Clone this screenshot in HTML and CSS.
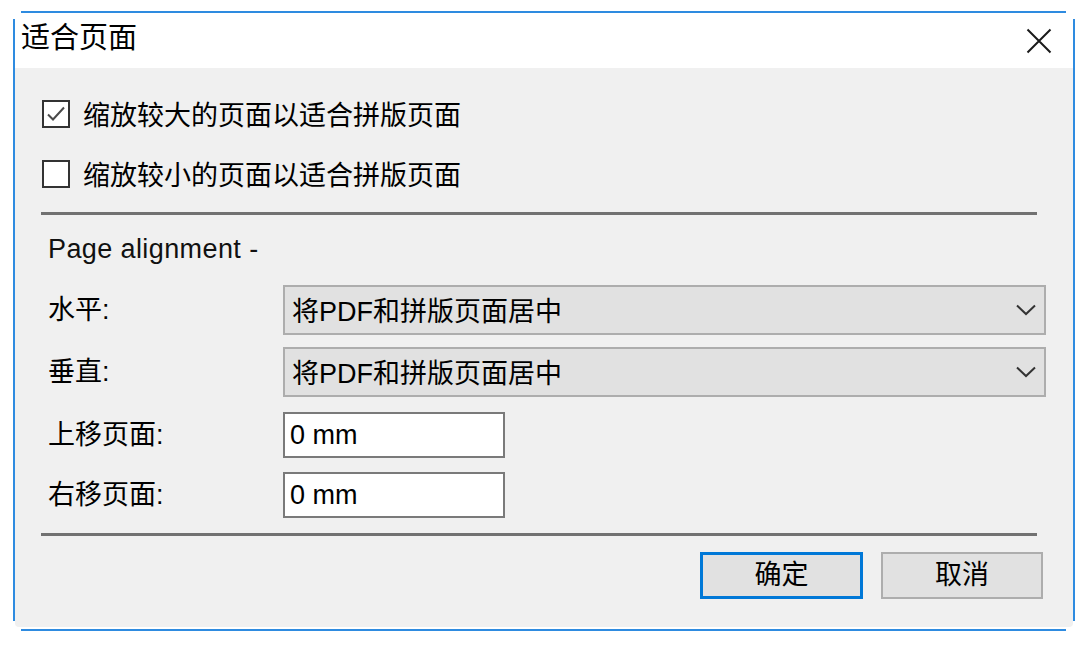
FILE: index.html
```html
<!DOCTYPE html>
<html lang="zh-CN">
<head>
<meta charset="utf-8">
<title>适合页面</title>
<link rel="stylesheet" href="styles.css">
</head>
<body>
<div class="window">
  <div class="edge"></div>
  <div class="frame">
    <div class="titlebar">
      <span class="title">适合页面</span>
      <svg class="close" width="26" height="26" viewBox="0 0 26 26" aria-hidden="true">
        <path d="M1.5 1.5 L24.5 24.5 M24.5 1.5 L1.5 24.5" stroke="#1a1a1a" stroke-width="2" fill="none"/>
      </svg>
    </div>
    <div class="content">
      <div class="check-row">
        <span class="box">
          <svg width="24" height="24" viewBox="0 0 24 24" aria-hidden="true">
            <path d="M4 12.5 L9 17.5 L20 5.5" stroke="#4a4a4a" stroke-width="2" fill="none"/>
          </svg>
        </span>
        <span class="check-label">缩放较大的页面以适合拼版页面</span>
      </div>
      <div class="check-row">
        <span class="box"></span>
        <span class="check-label">缩放较小的页面以适合拼版页面</span>
      </div>
      <div class="sep sep-top"></div>
      <div class="section-title">Page alignment -</div>
      <div class="form">
        <div class="field">
          <span class="label">水平:</span>
          <div class="select">
            <span>将PDF和拼版页面居中</span>
            <svg class="chev" width="20" height="12" viewBox="0 0 20 12" aria-hidden="true">
              <path d="M1 1.5 L10 10 L19 1.5" stroke="#333" stroke-width="2" fill="none"/>
            </svg>
          </div>
        </div>
        <div class="field">
          <span class="label">垂直:</span>
          <div class="select">
            <span>将PDF和拼版页面居中</span>
            <svg class="chev" width="20" height="12" viewBox="0 0 20 12" aria-hidden="true">
              <path d="M1 1.5 L10 10 L19 1.5" stroke="#333" stroke-width="2" fill="none"/>
            </svg>
          </div>
        </div>
        <div class="field field-input first-input">
          <span class="label">上移页面:</span>
          <div class="input">0 mm</div>
        </div>
        <div class="field field-input">
          <span class="label">右移页面:</span>
          <div class="input">0 mm</div>
        </div>
      </div>
      <div class="sep sep-bottom"></div>
      <div class="buttons">
        <div class="btn btn-primary">确定</div>
        <div class="btn">取消</div>
      </div>
    </div>
  </div>
  <div class="edge edge-bottom"></div>
</div>
</body>
</html>
```

FILE: styles.css
```css
html, body {
  margin: 0;
  padding: 0;
  background: #ffffff;
}

body {
  padding-top: 11px;
  font-family: "Liberation Sans", "Noto Sans CJK SC", sans-serif;
  color: #000;
}

.window {
  margin-left: 13px;
  width: 1062px;
}

.edge {
  height: 2px;
  margin: 0 9px 0 8px;
  background: #2e8be0;
}

.edge-bottom {
  margin-top: 2px;
}

.frame {
  padding: 0 2px;
  background:
    linear-gradient(#2e8be0, #2e8be0) left 6px / 2px calc(100% - 12px) no-repeat,
    linear-gradient(#2e8be0, #2e8be0) right 6px / 2px calc(100% - 12px) no-repeat;
}

.titlebar {
  height: 55px;
  background: #ffffff;
  display: flex;
  align-items: center;
  justify-content: space-between;
  padding: 0 21px 0 6px;
}

.title {
  font-size: 29px;
  line-height: 36px;
  margin-top: -5px;
}

.close {
  display: block;
  margin-top: 1px;
}

.content {
  background: #f0f0f0;
  padding: 32px 27px 28px 26px;
  border-radius: 0 0 4px 4px;
}

.check-row {
  display: flex;
  align-items: center;
  height: 28px;
}

.check-row + .check-row {
  margin-top: 32px;
}

.box {
  box-sizing: border-box;
  width: 28px;
  height: 28px;
  border: 2px solid #333;
  background: #fff;
  margin-left: 1px;
  display: flex;
  align-items: center;
  justify-content: center;
}

.box svg {
  display: block;
}

.check-label {
  font-size: 27px;
  line-height: 32px;
  margin-left: 13px;
  margin-top: 3px;
}

.sep {
  height: 3px;
  background: #717171;
  margin-right: 9px;
}

.sep-top {
  margin-top: 24px;
}

.section-title {
  font-size: 27px;
  letter-spacing: 0.4px;
  line-height: 32px;
  margin-top: 18px;
  padding-left: 7px;
  color: #111;
}

.form {
  margin-top: 20px;
}

.field {
  display: flex;
  align-items: center;
}

.field + .field {
  margin-top: 12px;
}

.field.first-input {
  margin-top: 15px;
}

.field.first-input + .field {
  margin-top: 14px;
}

.label {
  width: 235px;
  flex: none;
  padding-left: 7px;
  font-size: 27px;
  line-height: 32px;
}

.select {
  flex: 1;
  box-sizing: border-box;
  height: 50px;
  background: #e1e1e1;
  border: 2px solid #adadad;
  display: flex;
  align-items: center;
  justify-content: space-between;
  padding: 3px 8px 0 7px;
  font-size: 27px;
  line-height: 32px;
}

.chev {
  display: block;
  margin-top: -3px;
}

.input {
  box-sizing: border-box;
  width: 222px;
  height: 46px;
  background: #fff;
  border: 2px solid #7a7a7a;
  font-size: 27px;
  line-height: 40px;
  padding: 1px 0 0 5px;
}

.sep-bottom {
  margin-top: 15px;
}

.buttons {
  margin-top: 16px;
  display: flex;
  justify-content: flex-end;
  gap: 18px;
  padding-right: 3px;
}

.btn {
  box-sizing: border-box;
  width: 162px;
  height: 47px;
  background: #e1e1e1;
  border: 2px solid #adadad;
  font-size: 27px;
  line-height: 43px;
  text-align: center;
}

.btn-primary {
  width: 163px;
  border: 3px solid #0078d7;
  line-height: 41px;
}
```
